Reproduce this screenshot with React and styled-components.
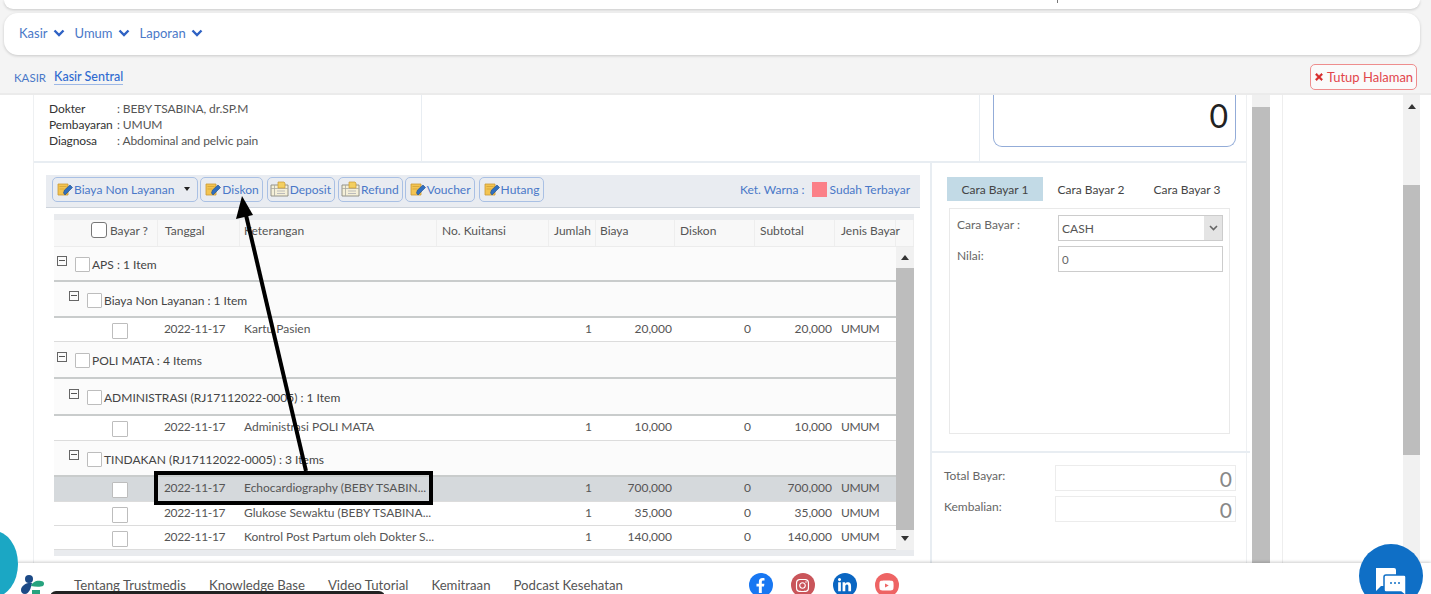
import React from "react";
import styled, { createGlobalStyle } from "styled-components";
import { FaFacebookF, FaInstagram, FaLinkedinIn, FaYoutube, FaTimes } from "react-icons/fa";

const Global = createGlobalStyle`
  html, body { margin: 0; padding: 0; background: #fff; }
  body { font-family: Lato, "Open Sans", sans-serif; font-size: 12px; color: #555; overflow: hidden; }
  * { box-sizing: border-box; }
`;

const Shell = styled.div`
  position: relative; width: 1431px; height: 594px; overflow: hidden;
  display: flex; flex-direction: column; background: #f4f4f4;
`;
const TopCard = styled.div`
  height: 9px; margin: 0 11px 4px 4px; background: #fff; border-radius: 0 0 14px 14px;
  box-shadow: 0 1px 3px rgba(0,0,0,.18); display: flex; justify-content: flex-end; padding-right: 362px;
`;
const TopTick = styled.span`width: 1px; height: 3px; background: #777;`;
const MenuCard = styled.nav`
  height: 42px; margin: 0 11px 0 4px; padding: 0 15px 2px; background: #fff; border-radius: 14px;
  box-shadow: 0 1px 3px rgba(0,0,0,.18); display: flex; align-items: center; gap: 10px;
`;
const MenuItem = styled.a`
  display: flex; align-items: center; gap: 5px; color: #4a78c8; font-size: 13px; padding-bottom: 1px;
`;
const Crumbs = styled.div`
  height: 40px; padding: 6px 14px 0 14px; display: flex; align-items: center; gap: 8px;
  border-bottom: 2px solid #ebebeb;
`;
const CrumbRoot = styled.span`color: #4a78c8; font-size: 11.5px;`;
const CrumbLink = styled.span`
  color: #2f6bd0; font-size: 12.5px; font-weight: 500; border-bottom: 1px solid #9db8e6; line-height: 15px;
`;
const CloseBtn = styled.button`
  margin-left: auto; height: 26px; width: 107px; padding: 0; border: 1px solid #ee8d8d; border-radius: 5px;
  background: #fafafa; color: #e2464b; font: 13px Lato, sans-serif; display: flex; align-items: center; justify-content: center; gap: 3px;
  svg { font-size: 10px; color: #d62a2a; stroke: #d62a2a; stroke-width: 30; }
`;
const Body = styled.main`
  height: 468px; flex: none; display: flex; background: #fff; padding-left: 33px; overflow: hidden;
`;
const Panel = styled.section`
  width: 1214px; flex: none; border-left: 1px solid #eef0f2; border-right: 1px solid #eef0f2;
  display: flex; flex-direction: column; height: 468px;
`;
const InfoRow = styled.div`
  height: 68px; flex: none; display: grid; grid-template-columns: 388px 558px 1fr;
  border-bottom: 2px solid #e8edf2;
`;
const Patient = styled.div`
  display: flex; flex-direction: column; justify-content: flex-end; padding: 0 0 12px 15px; overflow: hidden;
  border-right: 1px solid #e8edf2; color: #444; font-size: 12px; line-height: 16px;
`;
const InfoLine = styled.div`display: flex; letter-spacing: -.1px; flex: none;`;
const InfoKey = styled.span`width: 68px; color: #333; white-space: nowrap;`;
const InfoVal = styled.span`color: #555;`;
const Blank = styled.div`border-right: 1px solid #e8edf2;`;
const TotalCell = styled.div`padding: 0 10px 0 13px;`;
const TotalBox = styled.div`
  height: 52px; border: 1px solid #93acd8; border-top: none; border-radius: 0 0 9px 9px;
  font-size: 32px; color: #222; text-align: right; padding: 1px 7px 0 0; line-height: 40px;
`;
const Split = styled.div`flex: 1; display: grid; grid-template-columns: 898px 1fr;`;
const LeftCol = styled.div`padding: 12px 10px 0 12px; border-right: 2px solid #e8edf2;`;
const Toolbar = styled.div`
  height: 33px; background: #e9ecf1; border-bottom: 1px solid #cdd3db; padding: 0 10px 4px 6px;
  display: flex; align-items: center; gap: 2px; margin-bottom: 6px;
`;
const ToolBtn = styled.button`
  height: 25px; padding: 0 ${p => p.$pr || 3}px 0 ${p => p.$pl || 4}px; border: 1px solid #a9c0e4; border-radius: 5px;
  background: #e9ecf1; color: #4a78c8; font: 12px Lato, sans-serif; display: flex; align-items: center; gap: 1px;
  white-space: nowrap; margin-right: ${p => p.$mr || 0}px;
`;
const Caret = styled.span`
  width: 0; height: 0; border: 3.5px solid transparent; border-top: 4px solid #222; border-bottom: none; margin-left: 9px;
`;
const Legend = styled.div`
  margin-left: auto; display: flex; align-items: center; color: #4a78c8; font-size: 12px; gap: 3px;
`;
const Swatch = styled.span`width: 15px; height: 15px; background: #fb8088; margin-left: 4px;`;
const TableWrap = styled.div`margin-left: 8px; width: 860px;`;
const Band = styled.div`height: ${p => p.$h}px; background: #e9ebee;`;
const HeadRow = styled.div`
  height: 27px; display: grid; grid-template-columns: 104px 82px 197px 112px 47px 79px 80px 80px 61px 18px;
  background: #f8f8f8; border-bottom: 1px solid #ececec;
`;
const HeadCell = styled.div`
  display: flex; align-items: center; gap: 3px; justify-content: ${p => p.$end ? "flex-end" : "flex-start"}; white-space: nowrap;
  padding: 0 ${p => p.$end ? 9 : 0}px 6px ${p => p.$end ? 0 : p.$pl || 5}px; border-right: 1px solid #eee; color: #555; font-size: 12px;
`;
const Scroller = styled.div`display: grid; grid-template-columns: 842px 18px; height: 303px; overflow: hidden;`;
const Rows = styled.div`background: #fbfbfb;`;
const Group = styled.div`
  height: ${p => p.$h}px; display: flex; align-items: center; padding: 2px 0 0 ${p => 3 + p.$level * 12}px;
  border-bottom: 2px solid #c9cccc; background: #fbfbfb; color: #444; font-size: 12px; white-space: nowrap;
`;
const Expander = styled.span`
  width: 10px; height: 10px; border: 1px solid #666; margin: -8px 8px 0 0; position: relative;
  &::after { content: ""; position: absolute; left: 1px; right: 1px; top: 3px; height: 1px; background: #555; }
`;
const Check = styled.span`
  width: ${p => p.$s || 15}px; height: ${p => p.$s || 15}px; background: #fff; flex: none; display: inline-block;
  border: 1px solid ${p => p.$dark ? "#777" : "#bdbdbd"}; border-radius: ${p => p.$dark ? 3 : 1}px;
  margin-right: ${p => p.$mr ?? 2}px; margin-top: ${p => p.$mt || 0}px;
`;
const DataRow = styled.div`
  height: ${p => p.$h || 24}px; display: grid; grid-template-columns: 104px 82px 197px 112px 47px 79px 80px 80px 61px;
  align-items: center; background: ${p => p.$sel ? "#d5d9dc" : "#fff"}; border-bottom: 1px solid #dcdcdc; color: #555; font-size: 12px;
`;
const CheckCell = styled.div`padding: 2px 0 0 58px; display: flex; align-items: center;`;
const Cell = styled.div`
  padding: 0 ${p => p.$end ? (p.$pr ?? 3) : 0}px 3px ${p => p.$end ? 0 : p.$pl || 6}px; text-align: ${p => p.$end ? "right" : "left"};
  overflow: hidden; white-space: nowrap; letter-spacing: ${p => p.$ls || 0}px;
`;
const VBar = styled.div`
  background: #f1f1f1; display: flex; flex-direction: column; align-items: center; height: 100%; width: ${p => p.$w || 18}px; flex: none;
`;
const BarArrow = styled.span`
  width: 0; height: 0; border: 4px solid transparent; flex: none;
  ${p => p.$down ? "border-top: 5px solid #333; border-bottom: none;" : "border-bottom: 5px solid #333; border-top: none;"}
  margin: ${p => p.$m};
`;
const Thumb = styled.div`
  width: 100%; background: #bdbdbd; height: ${p => p.$h}px; flex: none; margin-top: ${p => p.$mt || 0}px;
`;
const RightCol = styled.div`display: flex; flex-direction: column;`;
const PayTop = styled.div`height: 290px; padding: 14px 15px 0 17px; border-bottom: 2px solid #e8edf2;`;
const Tabs = styled.div`display: flex; height: 24px; margin-left: -2px; margin-bottom: 7px;`;
const Tab = styled.div`
  width: ${p => p.$w}px; display: flex; align-items: center; justify-content: center; color: #444; font-size: 12px; padding-top: 1px;
  background: ${p => p.$on ? "#c2dae6" : "transparent"};
`;
const PayBox = styled.div`
  height: 226px; border: 1px solid #e9e9e9; padding: 6px 6px 0 7px; display: grid; grid-template-columns: 101px 1fr;
  grid-auto-rows: 26px; row-gap: 5px; align-items: center; width: 281px;
`;
const FieldLabel = styled.span`color: #666; font-size: 12px; align-self: start; padding-top: 2px;`;
const Select = styled.div`
  height: 26px; border: 1px solid #ccc; display: flex; align-items: center; padding-left: 3px; color: #555; font-size: 12px;
`;
const SelectArrow = styled.span`
  margin-left: auto; width: 18px; height: 24px; background: #e4e4e4; display: flex; align-items: center; justify-content: center; color: #666;
`;
const Input = styled.div`
  height: 26px; border: 1px solid #ccc; display: flex; align-items: center; padding-left: 3px; color: #666; font-size: 11.5px;
`;
const Totals = styled.div`padding: 12px 14px 0 12px; display: grid; grid-template-columns: 111px 1fr; grid-auto-rows: 26px; row-gap: 5px;`;
const TotalLabel = styled.span`color: #666; font-size: 12px; padding-top: 3px;`;
const TotalField = styled.div`
  border: 1px solid #ececec; text-align: right; font-size: 21px; color: #888; padding-right: 3px; line-height: 25px;
`;
const ScrollA = styled.div`width: 18px; flex: none; margin-left: 5px; display: flex; flex-direction: column; background: #f0f0f0;`;
const SideCol = styled.aside`
  width: 121px; flex: none; margin-left: 12px; border-left: 1px solid #eee;
`;
const Footer = styled.footer`
  height: 31px; flex: none; background: #fff; box-shadow: 0 -1px 3px rgba(0,0,0,.2); position: relative;
  display: flex; align-items: flex-start; padding: 14px 0 0 20px;
`;
const Logo = styled.svg`width: 25px; height: 22px; margin: -3px 29px 0 0; flex: none;`;
const FootLink = styled.a`color: #555; font-size: 13.2px; margin-right: 23px; line-height: 16px; white-space: nowrap;`;
const Socials = styled.div`display: flex; gap: 18px; margin: -4px 0 0 103px;`;
const Social = styled.span`
  width: 24px; height: 24px; border-radius: 50%; background: ${p => p.$c}; color: #fff; display: flex; align-items: center; justify-content: center;
  font-size: 15px;
`;
const TealDot = styled.div`
  position: absolute; left: -30px; top: 531px; width: 48px; height: 66px; border-radius: 50%; background: #1ba7c4;
`;
const DarkBar = styled.div`
  position: absolute; left: 50px; top: 591px; width: 335px; height: 10px; background: #222; border-radius: 6px 6px 0 0;
`;
const ChatBtn = styled.div`
  position: absolute; left: 1359px; top: 544px; width: 64px; height: 64px; border-radius: 50%; background: #0f6fc6;
  display: flex; align-items: flex-start; justify-content: center; padding-top: 24px;
`;
const Annotation = styled.svg`position: absolute; left: 0; top: 0; pointer-events: none;`;
const Highlight = styled.div`
  position: absolute; left: 154px; top: 471px; width: 279px; height: 34px; border: 4px solid #000; pointer-events: none;
`;

const Chevron = () => (
  <svg width="12" height="8" viewBox="0 0 12 8"><path d="M1.5 1.5 6 6l4.5-4.5" fill="none" stroke="#2f62c4" strokeWidth="2.4" /></svg>
);
const NoteIcon = () => (
  <svg width="16" height="16" viewBox="0 0 16 16">
    <path d="M1 3h10v11H1z" fill="#f3c451" stroke="#c99a35" strokeWidth=".8" />
    <path d="M2.5 5.5h7M2.5 8h5" stroke="#d9a93c" />
    <path d="m6.5 12 1-3L13 4l2.5 2.5L10 12l-2 2z" fill="#2f6fc0" stroke="#1d4a8a" strokeWidth=".6" />
  </svg>
);
const FolderIcon = () => (
  <svg width="19" height="17" viewBox="0 0 19 17">
    <path d="M1 4h17v11H1z" fill="#f4efd8" stroke="#8a8a80" strokeWidth=".9" />
    <path d="M4.5 4v11M1 7.5h17" stroke="#a8a8a0" strokeWidth=".8" />
    <path d="M8 1h6l1 1v5H8z" fill="#f3cf60" stroke="#c99a35" strokeWidth=".7" />
    <path d="M7 10h8M7 12.5h8" stroke="#bbb" />
  </svg>
);

const COLS_HEAD = [
  ["Tanggal", 7], ["Keterangan", 4], ["No. Kuitansi", 5], ["Jumlah", 5], ["Biaya", 4], ["Diskon", 5], ["Subtotal", 5], ["Jenis Bayar", 6],
];

const Row = ({ ket, qty, biaya, sub, sel, h }) => (
  <DataRow $sel={sel} $h={h}>
    <CheckCell><Check $s={16} $mr={0} /></CheckCell>
    <Cell $ls={-0.35}>2022-11-17</Cell>
    <Cell $pl={4}>{ket}</Cell>
    <Cell />
    <Cell $end $pr={4}>{qty}</Cell>
    <Cell $end>{biaya}</Cell>
    <Cell $end $pr={4}>0</Cell>
    <Cell $end>{sub}</Cell>
    <Cell $pl={6} $ls={-0.4}>UMUM</Cell>
  </DataRow>
);

const GroupRow = ({ level, h, children }) => (
  <Group $level={level} $h={h}>
    <Expander />
    <Check />
    {children}
  </Group>
);

export default function App() {
  return (
    <Shell>
      <Global />
      <TopCard><TopTick /></TopCard>
      <MenuCard>
        <MenuItem>Kasir <Chevron /></MenuItem>
        <MenuItem>Umum <Chevron /></MenuItem>
        <MenuItem>Laporan <Chevron /></MenuItem>
      </MenuCard>
      <Crumbs>
        <CrumbRoot>KASIR</CrumbRoot>
        <CrumbLink>Kasir Sentral</CrumbLink>
        <CloseBtn><FaTimes /> Tutup Halaman</CloseBtn>
      </Crumbs>
      <Body>
        <Panel>
          <InfoRow>
            <Patient>
              <InfoLine><InfoKey>Dokter</InfoKey><InfoVal>: BEBY TSABINA, dr.SP.M</InfoVal></InfoLine>
              <InfoLine><InfoKey>Pembayaran</InfoKey><InfoVal>: UMUM</InfoVal></InfoLine>
              <InfoLine><InfoKey>Diagnosa</InfoKey><InfoVal>: Abdominal and pelvic pain</InfoVal></InfoLine>
            </Patient>
            <Blank />
            <TotalCell><TotalBox>0</TotalBox></TotalCell>
          </InfoRow>
          <Split>
            <LeftCol>
              <Toolbar>
                <ToolBtn $pr={7}><NoteIcon />Biaya Non Layanan<Caret /></ToolBtn>
                <ToolBtn $mr={2}><NoteIcon />Diskon</ToolBtn>
                <ToolBtn $pl={2} $mr={1}><FolderIcon />Deposit</ToolBtn>
                <ToolBtn $pl={2}><FolderIcon />Refund</ToolBtn>
                <ToolBtn $mr={2}><NoteIcon />Voucher</ToolBtn>
                <ToolBtn><NoteIcon />Hutang</ToolBtn>
                <Legend>Ket. Warna : <Swatch /> Sudah Terbayar</Legend>
              </Toolbar>
              <TableWrap>
                <Band $h={6} />
                <HeadRow>
                  <HeadCell $end><Check $s={16} $dark $mr={0} />Bayar ?</HeadCell>
                  {COLS_HEAD.map(([t, pl]) => <HeadCell key={t} $pl={pl}>{t}</HeadCell>)}
                  <HeadCell />
                </HeadRow>
                <Scroller>
                  <Rows>
                    <GroupRow level={0} h={35}>APS : 1 Item</GroupRow>
                    <GroupRow level={1} h={36}>Biaya Non Layanan : 1 Item</GroupRow>
                    <Row ket="Kartu Pasien" qty="1" biaya="20,000" sub="20,000" />
                    <GroupRow level={0} h={37}>POLI MATA : 4 Items</GroupRow>
                    <GroupRow level={1} h={37}>ADMINISTRASI (RJ17112022-0005) : 1 Item</GroupRow>
                    <Row ket="Administrasi POLI MATA" qty="1" biaya="10,000" sub="10,000" h={25} />
                    <GroupRow level={1} h={36}>TINDAKAN (RJ17112022-0005) : 3 Items</GroupRow>
                    <Row sel ket="Echocardiography (BEBY TSABIN..." qty="1" biaya="700,000" sub="700,000" h={25} />
                    <Row ket="Glukose Sewaktu (BEBY TSABINA..." qty="1" biaya="35,000" sub="35,000" />
                    <Row ket="Kontrol Post Partum oleh Dokter S..." qty="1" biaya="140,000" sub="140,000" />
                  </Rows>
                  <VBar>
                    <BarArrow $m="8px 0 8px" />
                    <Thumb $h={262} />
                    <BarArrow $down $m="6px 0 0" />
                  </VBar>
                </Scroller>
                <Band $h={6} />
              </TableWrap>
            </LeftCol>
            <RightCol>
              <PayTop>
                <Tabs>
                  <Tab $on $w={96}>Cara Bayar 1</Tab>
                  <Tab $w={96}>Cara Bayar 2</Tab>
                  <Tab $w={96}>Cara Bayar 3</Tab>
                </Tabs>
                <PayBox>
                  <FieldLabel>Cara Bayar :</FieldLabel>
                  <Select>CASH<SelectArrow><svg width="9" height="6" viewBox="0 0 9 6"><path d="M1 1l3.5 3.5L8 1" fill="none" stroke="#666" strokeWidth="1.6" /></svg></SelectArrow></Select>
                  <FieldLabel>Nilai:</FieldLabel>
                  <Input>0</Input>
                </PayBox>
              </PayTop>
              <Totals>
                <TotalLabel>Total Bayar:</TotalLabel><TotalField>0</TotalField>
                <TotalLabel>Kembalian:</TotalLabel><TotalField>0</TotalField>
              </Totals>
            </RightCol>
          </Split>
        </Panel>
        <ScrollA><Thumb $mt={12} $h={456} /></ScrollA>
        <SideCol />
        <VBar $w={17}>
          <BarArrow $m="9px 0 0" />
          <Thumb $mt={76} $h={270} />
        </VBar>
      </Body>
      <Footer>
        <Logo viewBox="0 0 25 22">
          <circle cx="9" cy="5" r="4" fill="#1c4a86" />
          <path d="M1 16c0-4 6-8 11-7-1 5-3 11-7 11-3 0-4-2-4-4z" fill="#1c4a86" />
          <path d="M11 12c1-4 6-6 10-5 3 0 4 3 2 5-2 1-8 1-12 0z" fill="#26a37e" />
          <path d="M12 16h8v6h-8z" fill="#26a37e" />
        </Logo>
        <FootLink>Tentang Trustmedis</FootLink>
        <FootLink>Knowledge Base</FootLink>
        <FootLink>Video Tutorial</FootLink>
        <FootLink>Kemitraan</FootLink>
        <FootLink>Podcast Kesehatan</FootLink>
        <Socials>
          <Social $c="#1877f2"><FaFacebookF /></Social>
          <Social $c="#c9555a"><FaInstagram /></Social>
          <Social $c="#0a66c2"><FaLinkedinIn /></Social>
          <Social $c="#ee6464"><FaYoutube /></Social>
        </Socials>
      </Footer>
      <TealDot />
      <DarkBar />
      <ChatBtn>
        <svg width="34" height="30" viewBox="0 0 34 30">
          <path d="M2 0h18a2 2 0 0 1 2 2v14a2 2 0 0 1-2 2H7l-5 5z" fill="#fff" />
          <path d="M12 7h18a2 2 0 0 1 2 2v15l-0 4-5-4H12a2 2 0 0 1-2-2V9a2 2 0 0 1 2-2z" fill="#fff" stroke="#0f6fc6" strokeWidth="1.5" />
          <circle cx="17" cy="15" r="1" fill="#0f6fc6" /><circle cx="21" cy="15" r="1" fill="#0f6fc6" /><circle cx="25" cy="15" r="1" fill="#0f6fc6" />
        </svg>
      </ChatBtn>
      <Annotation width="1431" height="594">
        <line x1="306" y1="471" x2="246" y2="215" stroke="#000" strokeWidth="4" />
        <path d="M242 196 236 219 253 215z" fill="#000" />
      </Annotation>
      <Highlight />
    </Shell>
  );
}
